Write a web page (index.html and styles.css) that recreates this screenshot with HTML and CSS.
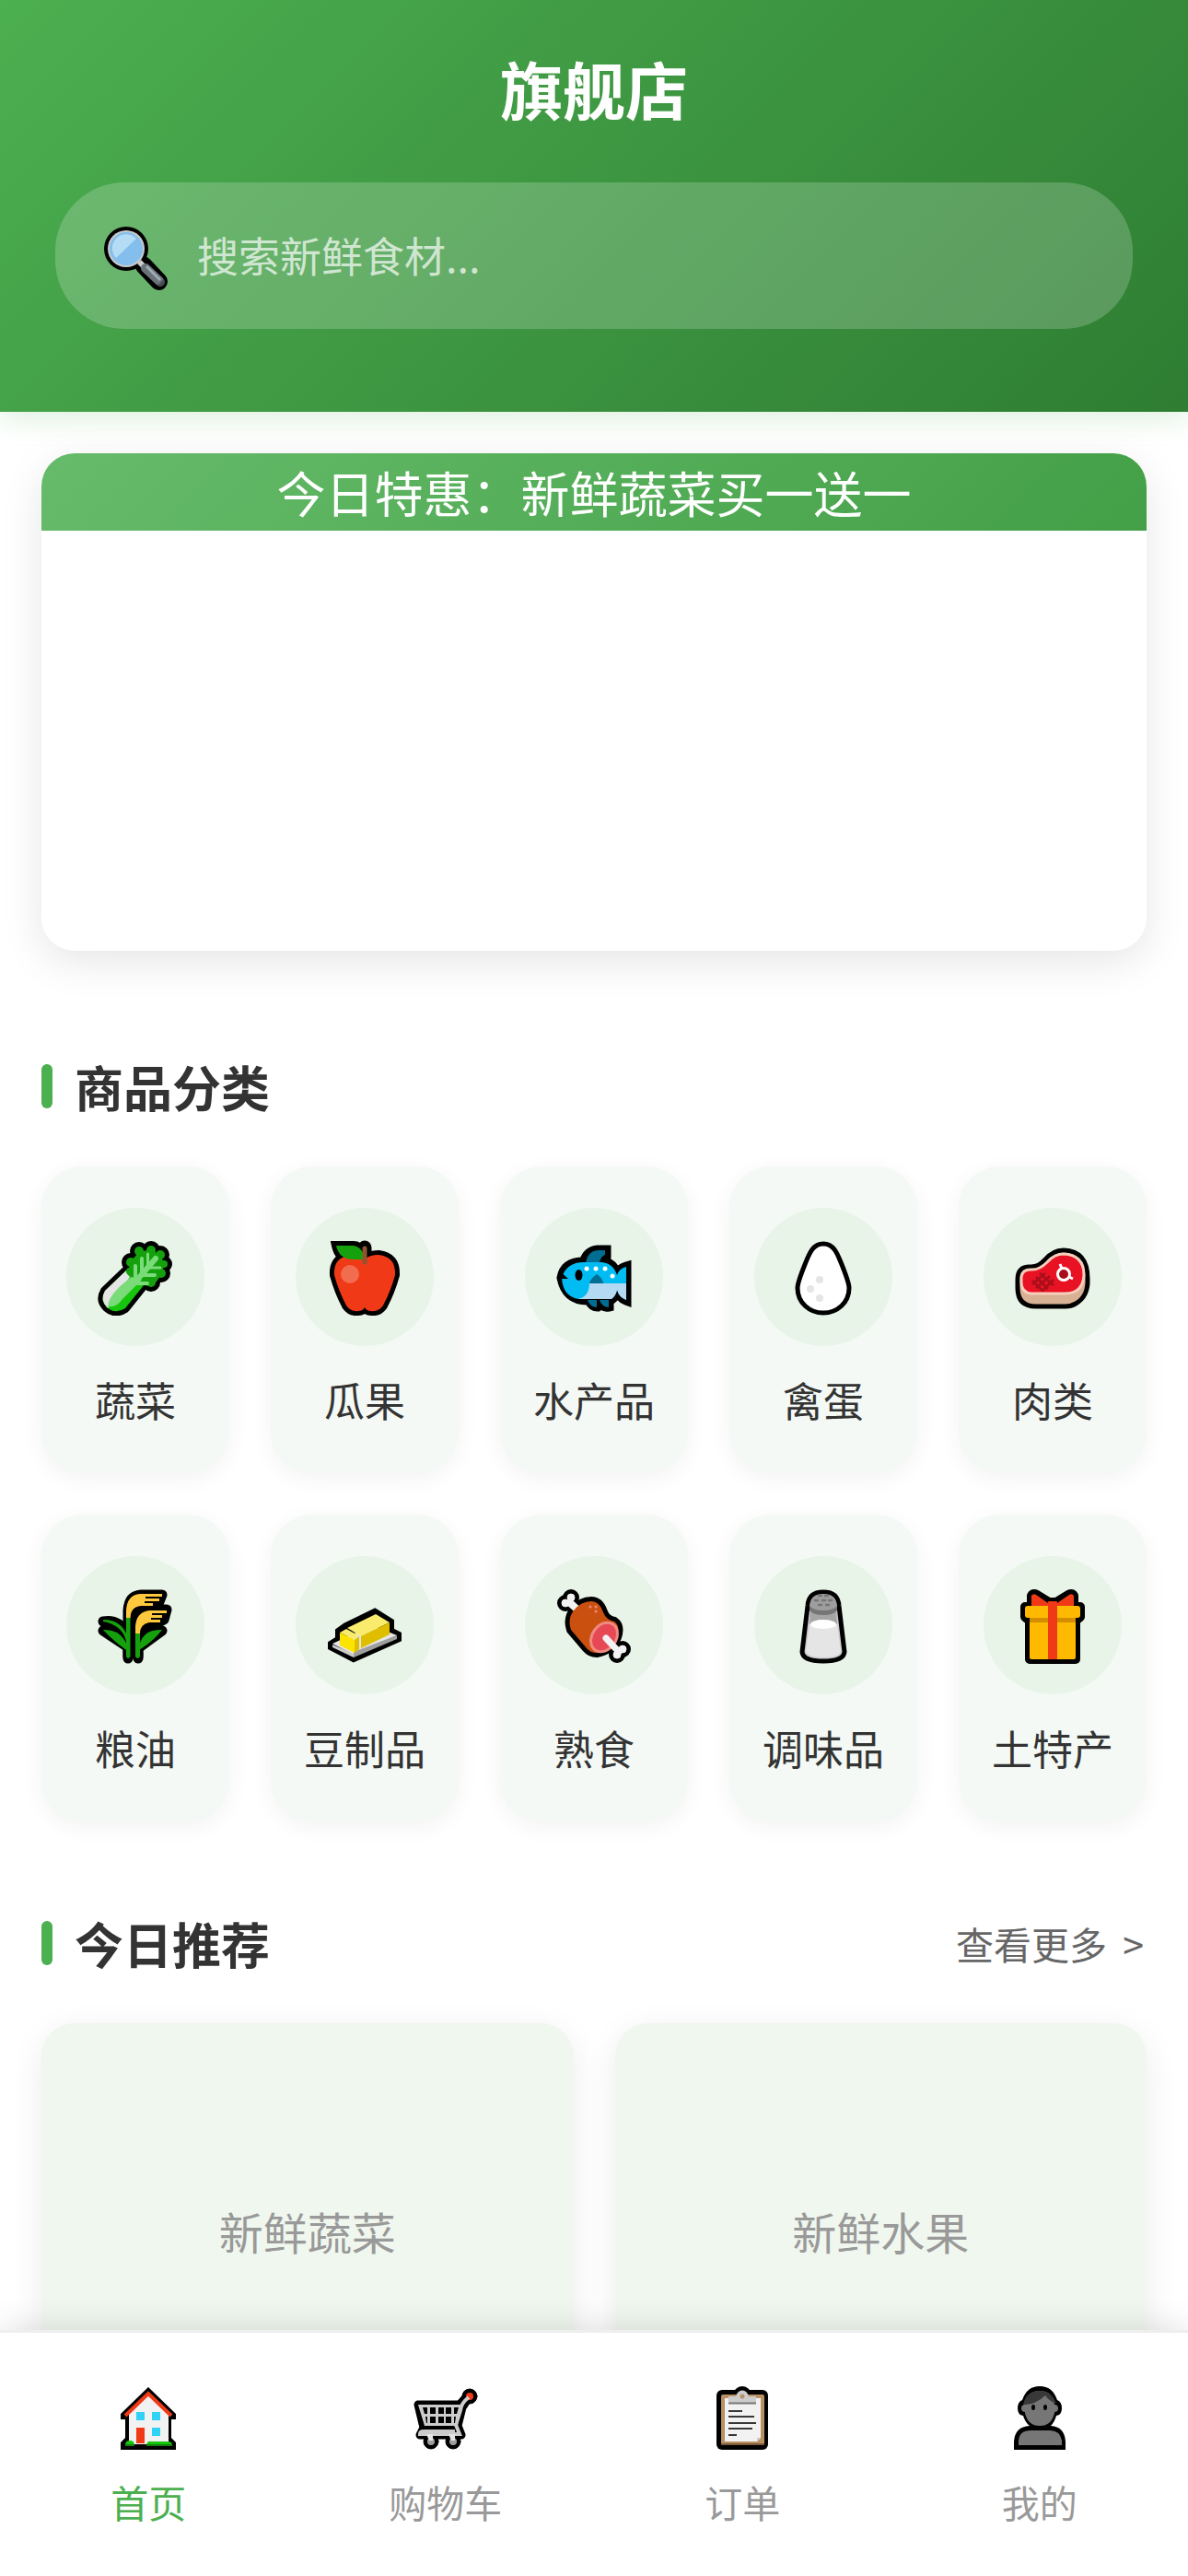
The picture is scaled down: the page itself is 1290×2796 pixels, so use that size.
FILE: index.html
```html
<!DOCTYPE html>
<html lang="zh-CN">
<head>
<meta charset="UTF-8">
<meta name="viewport" content="width=device-width, initial-scale=1.0">
<title>旗舰店</title>
<link rel="stylesheet" href="styles.css">
</head>
<body>

<header class="header">
    <h1 class="store-title">旗舰店</h1>
    <form class="search-bar">
        <label for="search" class="search-label" aria-label="搜索">
            <svg class="search-icon" viewBox="0 0 72 72">
                <path d="M44 43L60.500 60.500" stroke="#000" stroke-width="19" stroke-linecap="round"/>
                <circle cx="25" cy="25" r="24" fill="#000"/>
                <path d="M39 39L46 46" stroke="#ccc" stroke-width="6"/>
                <path d="M46 46L61 60" stroke="#697378" stroke-width="10" stroke-linecap="round"/>
                <path d="M59 65a5 5 0 0 0 7-7z" fill="#464f54"/>
                <path d="M47 44L62 59" stroke="#9eacb3" stroke-width="3"/>
                <circle cx="25" cy="25" r="20" fill="#ccc"/>
                <circle cx="25" cy="25" r="18" fill="#83beec"/>
                <path d="M14 35A15 15 0 0 1 36 14z" fill="#b4dcf4"/>
            </svg>
        </label>
        <input type="search" id="search" class="search-input" placeholder="搜索新鲜食材...">
    </form>
</header>

<main class="content">
    <section class="banner">
        <div class="banner-slide">今日特惠：新鲜蔬菜买一送一</div>
    </section>

    <section class="section">
        <div class="section-head">
            <h2 class="section-title">商品分类</h2>
        </div>
        <div class="category-grid">
            <a href="#" class="category">
                <span class="category-icon">
                    <svg viewBox="0 0 84 84">
                        <g fill="#000" stroke="#000" stroke-width="10" stroke-linejoin="round">
                            <path d="M32 35L9 57Q3 67 11 75Q20 83 31 76L51 51z"/>
                            <path d="M36 26L46 15L59 12L70 19L73 28L71 39L61 48L48 46L36 38z"/>
                            <circle cx="37" cy="26" r="5"/><circle cx="46" cy="14" r="5"/><circle cx="59" cy="13" r="5"/><circle cx="69" cy="18" r="5"/><circle cx="73" cy="28" r="4"/><circle cx="70" cy="38" r="5"/><circle cx="59" cy="48" r="5"/>
                        </g>
                        <path d="M32 35L9 57Q3 67 11 75Q20 83 31 76L51 51z" fill="#16c60c"/>
                        <path d="M32 35L9 57Q3 67 12 76L36 42z" fill="#e5e5e5"/>
                        <g fill="#15a10e">
                            <path d="M36 26L46 15L59 12L70 19L73 28L71 39L61 52L50 51L34 40z"/>
                            <circle cx="37" cy="26" r="5"/><circle cx="46" cy="14" r="5"/><circle cx="59" cy="13" r="5"/><circle cx="69" cy="18" r="5"/><circle cx="73" cy="28" r="4"/><circle cx="70" cy="38" r="5"/><circle cx="59" cy="48" r="5"/><circle cx="36" cy="36" r="4"/>
                        </g>
                        <path d="M38 42Q13 60 12 74Q21 76 28 66L49 45z" fill="#79dc79"/>
                        <g stroke="#79dc79" stroke-linecap="round" fill="none">
                            <path d="M44 45L64 22" stroke-width="6"/>
                            <path d="M42 30V42M49 22V37" stroke-width="4"/>
                            <path d="M55.500 17V30M57 32H69" stroke-width="3"/>
                            <path d="M50 40H63M44 49H55" stroke-width="4"/>
                        </g>
                    </svg>
                </span>
                <span class="category-name">蔬菜</span>
            </a>
            <a href="#" class="category">
                <span class="category-icon">
                    <svg viewBox="0 0 84 84">
                        <g stroke="#000" stroke-width="10" fill="#000">
                            <path d="M11 8H30Q36 8 40 15V23H27Q14 22 11 8z"/>
                            <path d="M42 10V20" stroke-width="15" stroke-linecap="round"/>
                            <path d="M42 23Q47 18 57 18Q76 20 75 40Q70 58 62 73Q57 80 49 79Q44 79 42 75Q40 79 35 79Q27 80 22 73Q14 58 9 40Q8 24 22 19z"/>
                        </g>
                        <path d="M42 23Q47 18 57 18Q76 20 75 40Q70 58 62 73Q57 80 49 79Q44 79 42 75Q40 79 35 79Q27 80 22 73Q14 58 9 40Q8 24 20 20z" fill="#f03a17"/>
                        <path d="M11 8H30Q37 9 40 16V23H28Q14 22 11 8z" fill="#15a10e"/>
                        <path d="M42 11V26" stroke="#8e562e" stroke-width="5" stroke-linecap="round"/>
                        <circle cx="26" cy="39" r="10" fill="#f26c50"/>
                    </svg>
                </span>
                <span class="category-name">瓜果</span>
            </a>
            <a href="#" class="category">
                <span class="category-icon">
                    <svg viewBox="0 0 84 84">
                        <path d="M31 26Q35 14 46 13H55V20L53 25Q63 28 67 39Q70 33 77 31V67Q69 64 67 56Q66 62 61 66H58V74Q53 75 50 71L46 74Q40 74 37 67Q12 68 7 43Q10 26 31 26z" stroke="#000" stroke-width="11"/>
                        <path d="M33 27Q35 14 46 13H54V18Q49 20 48 27z" fill="#006d93"/>
                        <path d="M31 26H50Q63 27 67 40Q69 33 77 31V67Q69 64 67 56Q66 62 61 66H25Q8 63 7 43Q12 26 31 26z" fill="#00bcf2"/>
                        <path d="M37 49H77V67Q69 64 67 56Q66 62 61 66H25Q37 63 37 49z" fill="#b4d9f2"/>
                        <path d="M37 49Q38 44 45 39Q52 44 52 49zM35 67H45V75Q37 74 35 67zM48 67H58V75Q50 74 48 67z" fill="#006d93"/>
                        <path d="M5 36L14 44H5z"/>
                        <ellipse cx="25.500" cy="40" rx="4" ry="6"/>
                        <g fill="#fff"><circle cx="34" cy="33" r="2.500"/><circle cx="44" cy="33" r="2.500"/><circle cx="54" cy="33" r="2.500"/><circle cx="62" cy="41" r="2.500"/></g>
                    </svg>
                </span>
                <span class="category-name">水产品</span>
            </a>
            <a href="#" class="category">
                <span class="category-icon">
                    <svg viewBox="0 0 84 84">
                        <path d="M42 6C53 6 57 16 61 26Q70 48 70 54C70 70 57 81 42 81S14 70 14 54Q14 48 23 26C27 16 31 6 42 6z" fill="#fff" stroke="#000" stroke-width="5"/>
                        <g fill="#e5e5e5"><circle cx="38" cy="45" r="4"/><circle cx="28" cy="55" r="4"/><circle cx="38" cy="65" r="4"/></g>
                    </svg>
                </span>
                <span class="category-name">禽蛋</span>
            </a>
            <a href="#" class="category">
                <span class="category-icon">
                    <svg viewBox="0 0 84 84">
                        <path d="M4 45Q4 31 17 31Q26 32 33 24Q42 13 54 13Q80 14 80 44Q81 63 67 71Q62 74 56 74H24Q4 74 4 54z" fill="#d8b094" stroke="#000" stroke-width="5"/>
                        <path d="M8 42Q9 34 18 34Q27 35 36 26Q44 17 54 17Q76 18 76 40Q75 60 55 60H19Q8 59 8 48z" fill="#e81224" stroke="#f7cdbb" stroke-width="3"/>
                        <path d="M20 46L31 57M24 42L37 55M28 38L43 51M43 45L31 57M39 41L24 54M34 38L20 50" stroke="#a80f1a" stroke-width="2.500"/>
                        <circle cx="54" cy="39" r="6.500" fill="#a80f1a" stroke="#fff" stroke-width="3"/>
                        <path d="M52 33L50 28M60 42L64 44" stroke="#fff" stroke-width="3"/>
                    </svg>
                </span>
                <span class="category-name">肉类</span>
            </a>
            <a href="#" class="category">
                <span class="category-icon">
                    <svg viewBox="0 0 84 84">
                        <g stroke="#000" stroke-width="11" stroke-linecap="round" stroke-linejoin="round">
                            <path d="M34 78V26Q35 10 48 9H71L67 19L53 25H76L73 36L58 44Q47 45 45 55V78" />
                            <path d="M34 76V66L7 48Q22 43 32 58Q25 41 7 38Q24 35 34 52M45 76V67L71 48Q53 43 46 60"/>
                        </g>
                        <g fill="#15a10e">
                            <path d="M32 33H36.500V76Q34 80 32 76zM42 50H47V76Q44.500 80 42 76z"/>
                            <path d="M32 69Q17 58 7 47Q28 46 34 67zM46 69Q61 60 71 47Q50 46 46 65z"/>
                            <path d="M7 36Q28 36 34 56Q35 62 33 64Q30 42 7 38z"/>
                        </g>
                        <path d="M32 34V26Q33 9 47 8H71V11H53V13H68V16H52V18H61V21H48Q37 22 36.500 34zM42 51V43Q43 28 57 26H76V29H60V31H71V34H59V36H69V39H57Q47 41 47 51z" fill="#ffc83d"/>
                    </svg>
                </span>
                <span class="category-name">粮油</span>
            </a>
            <a href="#" class="category">
                <span class="category-icon">
                    <svg viewBox="0 0 84 84">
                        <path d="M7 63L15 58V49L22 44L53 29L69 39V49L77 53V56L30 77L7 65z" stroke="#000" stroke-width="10"/>
                        <path d="M7 62L50 42L77 53L30 74z" fill="#e5e5e5"/>
                        <path d="M77 53V57L30 77V71z" fill="#9e9e9e"/>
                        <path d="M7 63V66L30 77V73z" fill="#ccc"/>
                        <path d="M23 45L54 30L69 39L38 54z" fill="#f9ec6c"/>
                        <path d="M38 54L69 39V52L38 67z" fill="#dfbe00"/>
                        <path d="M15 50L22 46L35 53L31 58z" fill="#f9ec6c"/>
                        <path d="M15 50L31 58V72L15 64z" fill="#fde300"/>
                        <path d="M31 58L36 54V68L31 72z" fill="#dfbe00"/>
                    </svg>
                </span>
                <span class="category-name">豆制品</span>
            </a>
            <a href="#" class="category">
                <span class="category-icon">
                    <svg viewBox="0 0 84 84">
                        <g stroke="#000" stroke-width="10" stroke-linejoin="round">
                            <path d="M39 16Q48 16 52 28Q55 36 64 38Q71 43 67 55Q62 69 45 72Q38 72 34 67L17 47Q13 35 20 26Q28 16 39 16z"/>
                            <circle cx="17" cy="12" r="4"/><circle cx="11" cy="18" r="4"/><path d="M13 14L24 25"/>
                            <circle cx="73" cy="68" r="4"/><circle cx="67" cy="74" r="4"/><path d="M60 58L70 71"/>
                        </g>
                        <g fill="#f2f2f2" stroke="#f2f2f2"><circle cx="17" cy="12" r="4"/><circle cx="11" cy="18" r="4"/><path d="M14 16L24 25" stroke-width="8"/></g>
                        <path d="M39 16Q48 16 52 28Q55 36 64 38Q71 43 67 55Q62 69 45 72Q38 72 34 67L17 47Q13 35 20 26Q28 16 39 16z" fill="#ca5010"/>
                        <ellipse cx="53" cy="55" rx="13" ry="17" transform="rotate(35 53 55)" fill="#e74856" stroke="#f08a80" stroke-width="3"/>
                        <g fill="#f2f2f2" stroke="#f2f2f2"><circle cx="73" cy="68" r="4"/><circle cx="67" cy="74" r="4"/><path d="M55 56L69 71" stroke-width="7" stroke-linecap="round"/></g>
                        <g fill="#f08a80"><circle cx="38" cy="22" r="1.500"/><circle cx="44" cy="22" r="1.500"/><circle cx="44" cy="27" r="1.500"/></g>
                    </svg>
                </span>
                <span class="category-name">熟食</span>
            </a>
            <a href="#" class="category">
                <span class="category-icon">
                    <svg viewBox="0 0 84 84">
                        <path d="M25 21Q26 6 42 6Q58 6 59 21L65 71Q64 81 42 81Q20 81 19 71z" fill="#ccc" stroke="#000" stroke-width="5"/>
                        <path d="M28 25H56L57 42H27z" fill="#a5a5a5"/>
                        <path d="M27 41H57L61 70Q60 77 42 77Q24 77 23 70z" fill="#e5e5e5"/>
                        <ellipse cx="42" cy="41" rx="14" ry="5" fill="#fff"/>
                        <path d="M27 20H57V26Q53 31 42 31Q31 31 27 26z" fill="#767676"/>
                        <path d="M27 21Q28 8 42 8Q56 8 57 21Q53 26 42 26Q31 26 27 21z" fill="#9e9e9e"/>
                        <path d="M37 10H40M44 10H47M33 15H36M41 15H44M48 15H51M37 20H40M45 20H48" stroke="#767676" stroke-width="2.500" stroke-linecap="round"/>
                    </svg>
                </span>
                <span class="category-name">调味品</span>
            </a>
            <a href="#" class="category">
                <span class="category-icon">
                    <svg viewBox="0 0 84 84">
                        <path d="M12 22H19V10Q21 7 25 9L38 17H46L59 9Q63 7 65 10V22H72V33L67 37V79H17V37L12 33z" stroke="#000" stroke-width="10" stroke-linejoin="round"/>
                        <path d="M19 21V10Q21 7 24 9L40 20V21zM65 21V10Q63 7 60 9L44 20V21z" fill="#f03a17"/>
                        <rect x="17" y="30" width="50" height="49" rx="2" fill="#ffb900"/>
                        <path d="M17 33H67V39H17z" fill="#d48c00"/>
                        <rect x="12" y="21" width="60" height="13" rx="3" fill="#ffb900"/>
                        <rect x="37" y="16" width="10" height="63" rx="1" fill="#f03a17"/>
                    </svg>
                </span>
                <span class="category-name">土特产</span>
            </a>
        </div>
    </section>

    <section class="section">
        <div class="section-head">
            <h2 class="section-title">今日推荐</h2>
            <a href="#" class="more-link">查看更多 <span class="more-arrow">&gt;</span></a>
        </div>
        <div class="product-grid">
            <a href="#" class="product">新鲜蔬菜</a>
            <a href="#" class="product">新鲜水果</a>
        </div>
    </section>
</main>

<nav class="tab-bar">
    <a href="#" class="tab active">
        <svg class="tab-icon" viewBox="0 0 72 72">
            <path d="M36 2L66 31V37H61V57L66 62V70H6V62L11 57V37H6V31z"/>
            <path d="M15 30L36 10L58 30V64H15z" fill="#f2f2f2"/>
            <path d="M11 33L36 9L61 33" fill="none" stroke="#f03a17" stroke-width="4"/>
            <path d="M23 29H32V38H23zM40 29H49V38H40zM40 46H49V55H40z" fill="#31d2f7"/>
            <path d="M23 46H32V63H23z" fill="#f03a17"/>
            <path d="M11 65Q11 60 16 60Q21 60 21 65zM34 65Q35 60 39 61H57Q62 61 62 65z" fill="#16c60c"/>
            <path d="M11 64H21V66H11zM34 64H62V66H34z" fill="#13800d"/>
        </svg>
        <span>首页</span>
    </a>
    <a href="#" class="tab">
        <svg class="tab-icon" viewBox="0 0 72 72">
            <g fill="#000" stroke="#000" stroke-linejoin="round" stroke-linecap="round">
                <path d="M6 21H51L59 12H62L54 24L49 44L53 54H8L12 46z" stroke-width="9"/>
                <circle cx="62" cy="12" r="8"/><circle cx="20" cy="61" r="8"/><circle cx="44" cy="61" r="8"/>
            </g>
            <circle cx="62" cy="12" r="4" fill="#f03a17"/>
            <path d="M6 21H52L49 44L13 44z" fill="#ccc"/>
            <path d="M61 13Q53 19 52 27L47 43L51 53H8Q8 50 12 50H46" fill="none" stroke="#ccc" stroke-width="4"/>
            <path d="M11 24H16V31H13zM19 24H25V31H19zM28 24H34V31H28zM36 24H42V31H36zM45 24H50L48 31H45zM14 34H16V41H15zM19 34H25V41H19zM28 34H34V41H28zM36 34H42V41H36zM45 34H47L46 41H45z" fill="#000"/>
            <circle cx="20" cy="61" r="4" fill="#9e9e9e"/><circle cx="44" cy="61" r="4" fill="#9e9e9e"/>
            <path d="M15 53H22V60H18zM39 53H46V60H42z" fill="#e5e5e5"/>
        </svg>
        <span>购物车</span>
    </a>
    <a href="#" class="tab">
        <svg class="tab-icon" viewBox="0 0 72 72">
            <rect x="8" y="5" width="56" height="65" rx="6"/>
            <circle cx="36" cy="11" r="10"/>
            <rect x="13" y="10" width="47" height="55" rx="2" fill="#b98f64"/>
            <path d="M13 64H60" stroke="#7c5a38" stroke-width="2"/>
            <path d="M17 14H56V57L52 61H17z" fill="#f2f2f2"/>
            <path d="M56 57H52V61z" fill="#ccc"/>
            <path d="M21 12H51V19H21z" fill="#ccc"/><circle cx="36" cy="12" r="6.500" fill="#ccc"/>
            <circle cx="36" cy="12" r="2.500" fill="#b98f64"/>
            <path d="M21 19.500H51" stroke="#767676" stroke-width="2"/>
            <path d="M21 28H36M21 34H49M21 41H51M21 47H47M21 54H30" stroke="#383838" stroke-width="2"/>
        </svg>
        <span>订单</span>
    </a>
    <a href="#" class="tab">
        <svg class="tab-icon" viewBox="0 0 72 72">
            <path d="M8 70V61Q9 45 25 44Q20 40 18 33Q12 32 12 25Q12 18 17 16Q22 1 36 1T55 16Q60 18 60 25Q60 32 54 33Q52 40 48 44Q63 45 64 61V70z"/>
            <path d="M13 65V60Q14 49 26 49H47Q58 49 60 60V65z" fill="#767676"/>
            <circle cx="20" cy="25" r="4" fill="#767676"/><circle cx="52" cy="25" r="4" fill="#767676"/>
            <path d="M20 21Q22 6 36 6T52 21V30Q49 44 36 44T20 30z" fill="#767676"/>
            <path d="M18 21Q21 6 36 6Q49 6 54 20Q46 17 42 11Q32 21 18 21z" fill="#383838"/>
            <ellipse cx="29" cy="24" rx="2" ry="3"/><ellipse cx="42" cy="24" rx="2" ry="3"/>
        </svg>
        <span>我的</span>
    </a>
</nav>

</body>
</html>
```
FILE: styles.css
```css
* {
    margin: 0;
    padding: 0;
    box-sizing: border-box;
}

body {
    display: flex;
    flex-direction: column;
    height: 100vh;
    font-family: "Noto Sans CJK SC", sans-serif;
    background-color: #fff;
    color: #333;
}

a {
    color: inherit;
    text-decoration: none;
}

svg {
    display: block;
}

.header {
    position: relative;
    z-index: 1;
    background: linear-gradient(135deg, #4caf50, #2e7d32);
    color: #fff;
    padding: 60px 60px 90px;
    box-shadow: 0 6px 30px rgba(76, 175, 80, 0.2);
}

.store-title {
    font-size: 68px;
    line-height: 72px;
    text-align: center;
    margin-bottom: 66px;
}

.search-bar {
    display: flex;
    align-items: center;
    gap: 30px;
    padding: 46px 52px 40px;
    border-radius: 75px;
    background-color: rgba(255, 255, 255, 0.2);
}

.search-icon {
    width: 72px;
    height: 72px;
}

.search-input {
    flex: 1;
    min-width: 0;
    height: 73px;
    padding-bottom: 9px;
    border: none;
    outline: none;
    background: none;
    color: #fff;
    font-family: inherit;
    font-size: 45px;
}

.search-input::placeholder {
    color: rgba(255, 255, 255, 0.7);
}

/* 中间内容滚动，头部和底部导航固定 */
.content {
    flex: 1;
    min-height: 0;
    padding: 45px;
    overflow-y: auto;
    scrollbar-width: none;
}

.banner {
    height: 540px;
    margin-bottom: 105px;
    border-radius: 36px;
    overflow: hidden;
    box-shadow: 0 12px 45px rgba(0, 0, 0, 0.1);
}

.banner-slide {
    background: linear-gradient(135deg, #66bb6a, #43a047);
    color: #fff;
    font-size: 53px;
    line-height: 84px;
    text-align: center;
}

.section {
    margin-bottom: 90px;
}

.section-head {
    display: flex;
    align-items: center;
    justify-content: space-between;
    margin-bottom: 45px;
}

.section-title {
    display: flex;
    align-items: center;
    gap: 24px;
    font-size: 53px;
    line-height: 84px;
}

.section-title::before {
    content: "";
    width: 12px;
    height: 48px;
    border-radius: 6px;
    background-color: #4caf50;
}

.more-link {
    padding-right: 3px;
    font-size: 41px;
    color: #666;
}

.more-arrow {
    margin-left: 8px;
}

.category-grid {
    display: grid;
    grid-template-columns: repeat(5, 1fr);
    gap: 45px;
}

.category {
    display: flex;
    flex-direction: column;
    align-items: center;
    gap: 27px;
    padding: 45px 0 48px;
    border-radius: 45px;
    background-color: #f4f9f5;
    box-shadow: 0 6px 24px rgba(0, 0, 0, 0.05);
}

.category-icon {
    display: flex;
    align-items: center;
    justify-content: center;
    width: 150px;
    height: 150px;
    border-radius: 50%;
    background-color: #e8f4e8;
}

.category-icon svg {
    width: 84px;
    height: 84px;
}

.category-name {
    font-size: 44px;
    line-height: 63px;
}

.product-grid {
    display: grid;
    grid-template-columns: repeat(2, 1fr);
    gap: 45px;
}

.product {
    display: flex;
    align-items: center;
    justify-content: center;
    height: 450px;
    border-radius: 36px;
    background-color: #f0f7ee;
    box-shadow: 0 9px 36px rgba(0, 0, 0, 0.08);
    color: #999;
    font-size: 48px;
}

.tab-bar {
    position: relative;
    z-index: 1;
    display: flex;
    padding: 57px 0 51px;
    background-color: #fff;
    border-top: 3px solid #eee;
    box-shadow: 0 -6px 30px rgba(0, 0, 0, 0.1);
}

.tab {
    flex: 1;
    display: flex;
    flex-direction: column;
    align-items: center;
    gap: 24px;
    color: #999;
    font-size: 41px;
    line-height: 60px;
}

.tab.active {
    color: #4caf50;
}

.tab-icon {
    width: 72px;
    height: 72px;
}
```
